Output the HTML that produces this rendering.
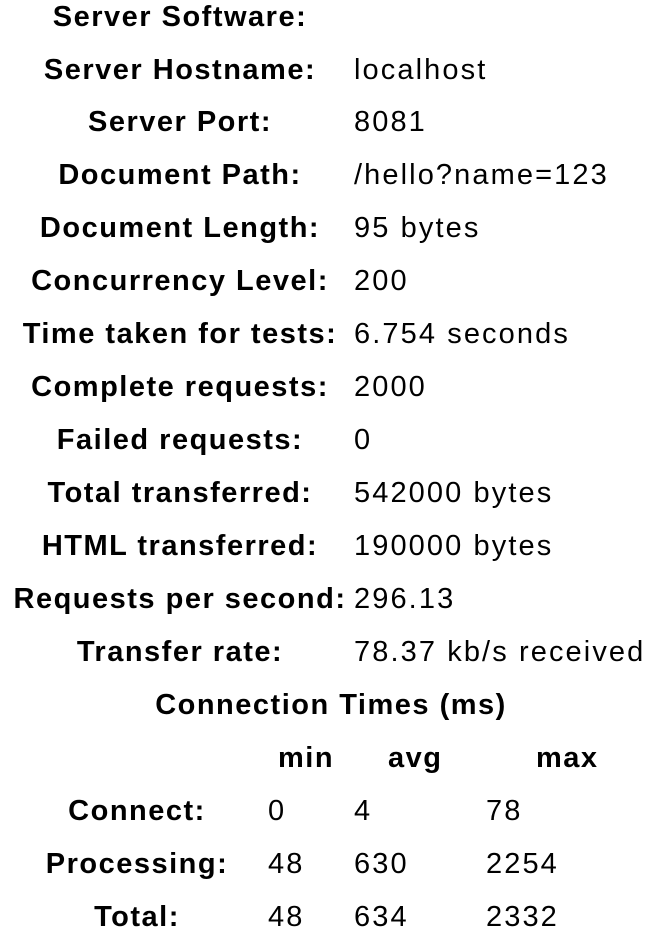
<!DOCTYPE html>
<html><head><meta charset="utf-8"><style>
html,body{margin:0;padding:0;background:#fff;width:660px;height:948px;overflow:hidden}
body{position:relative;font-family:"Liberation Sans",Arial,sans-serif;font-size:29px;color:#000;letter-spacing:2.1px}
.r{position:absolute;height:40px;line-height:40px;white-space:nowrap}
.l{font-weight:bold;width:360px;left:0;text-align:center;letter-spacing:1.5px}
.v{left:354px}
.b{font-weight:bold;letter-spacing:1.5px}
</style></head><body>
<div class="r l" style="top:-3px">Server Software:</div>
<div class="r l" style="top:50px">Server Hostname:</div><div class="r v" style="top:50px">localhost</div>
<div class="r l" style="top:102px">Server Port:</div><div class="r v" style="top:102px">8081</div>
<div class="r l" style="top:155px">Document Path:</div><div class="r v" style="top:155px">/hello?name=123</div>
<div class="r l" style="top:208px">Document Length:</div><div class="r v" style="top:208px">95 bytes</div>
<div class="r l" style="top:261px">Concurrency Level:</div><div class="r v" style="top:261px">200</div>
<div class="r l" style="top:314px">Time taken for tests:</div><div class="r v" style="top:314px">6.754 seconds</div>
<div class="r l" style="top:367px">Complete requests:</div><div class="r v" style="top:367px">2000</div>
<div class="r l" style="top:420px">Failed requests:</div><div class="r v" style="top:420px">0</div>
<div class="r l" style="top:473px">Total transferred:</div><div class="r v" style="top:473px">542000 bytes</div>
<div class="r l" style="top:526px">HTML transferred:</div><div class="r v" style="top:526px">190000 bytes</div>
<div class="r l" style="top:579px">Requests per second:</div><div class="r v" style="top:579px">296.13</div>
<div class="r l" style="top:632px">Transfer rate:</div><div class="r v" style="top:632px">78.37 kb/s received</div>
<div class="r b" style="top:685px;left:0;width:662px;text-align:center">Connection Times (ms)</div>
<div class="r b" style="top:738px;left:278px">min</div>
<div class="r b" style="top:738px;left:388px">avg</div>
<div class="r b" style="top:738px;left:536px">max</div>
<div class="r b" style="top:791px;left:0;width:274px;text-align:center">Connect:</div>
<div class="r" style="top:791px;left:268px">0</div><div class="r" style="top:791px;left:354px">4</div><div class="r" style="top:791px;left:486px">78</div>
<div class="r b" style="top:844px;left:0;width:274px;text-align:center">Processing:</div>
<div class="r" style="top:844px;left:268px">48</div><div class="r" style="top:844px;left:354px">630</div><div class="r" style="top:844px;left:486px">2254</div>
<div class="r b" style="top:897px;left:0;width:274px;text-align:center">Total:</div>
<div class="r" style="top:897px;left:268px">48</div><div class="r" style="top:897px;left:354px">634</div><div class="r" style="top:897px;left:486px">2332</div>
</body></html>
